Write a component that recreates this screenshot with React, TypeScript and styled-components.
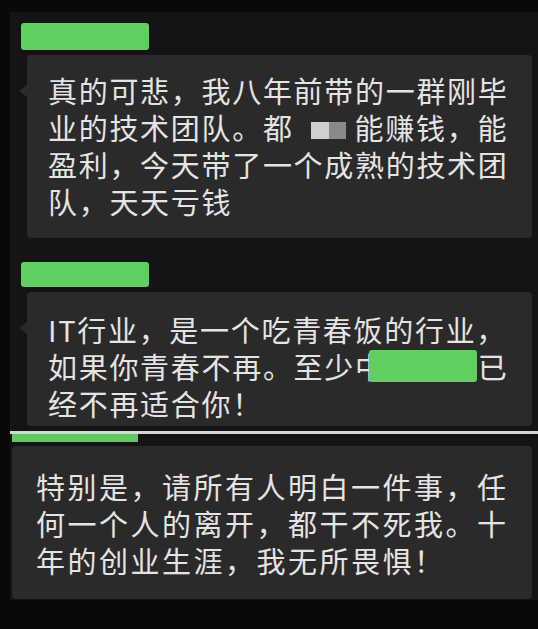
import React from "react";
import styled, { createGlobalStyle } from "styled-components";

const Global = createGlobalStyle`
  html, body {
    margin: 0;
    padding: 0;
    background: #090909;
  }
  #root {
    width: 538px;
    height: 629px;
    overflow: hidden;
  }
`;

const Page = styled.div`
  width: 538px;
  height: 629px;
  background: #090909;
  padding: 12px 0 0 10px;
  box-sizing: border-box;
  font-family: "Noto Sans CJK SC", "Noto Sans", sans-serif;
`;

const Panel = styled.div`
  display: flex;
  flex-direction: column;
  background: #141414;
  height: 588px;
`;

const NameBar = styled.div<{ $top: number; $h: number }>`
  margin: ${(p) => p.$top}px 0 0 11px;
  width: 128px;
  height: ${(p) => p.$h}px;
  background: #62cf62;
  border-radius: 3px;
`;

const Bubble = styled.div<{
  $top: number;
  $left: number;
  $pt: number;
  $pb: number;
  $pl: number;
  $ls: number;
  $tail?: boolean;
}>`
  position: relative;
  margin: ${(p) => p.$top}px 6px 0 ${(p) => p.$left}px;
  padding: ${(p) => p.$pt}px 0 ${(p) => p.$pb}px ${(p) => p.$pl}px;
  background: #2a2a2a;
  border-radius: 4px;
  color: #e4e4e4;
  font-size: 29px;
  line-height: 37px;
  letter-spacing: ${(p) => p.$ls}px;
  ${(p) =>
    p.$tail &&
    `
    &::before {
      content: "";
      position: absolute;
      left: -8px;
      top: 30px;
      border-style: solid;
      border-width: 6px 8px 6px 0;
      border-color: transparent #2a2a2a transparent transparent;
    }
  `}
`;

const Line = styled.span`
  display: block;
  height: 37px;
  white-space: nowrap;
`;

const Censor = styled.span`
  display: inline-flex;
  width: 61px;
  height: 17px;
  padding-left: 17px;
  box-sizing: border-box;
  vertical-align: 1px;
`;

const CensorBlock = styled.span<{ $shade: string; $w: number }>`
  display: block;
  width: ${(p) => p.$w}px;
  height: 17px;
  background: ${(p) => p.$shade};
`;

const Masked = styled.span`
  position: relative;
`;

const MaskBox = styled.span`
  position: absolute;
  left: 14px;
  top: 50%;
  margin-top: -16px;
  width: 108px;
  height: 32px;
  background: #62cf62;
  border-radius: 3px;
`;

const Divider = styled.div`
  margin-top: 5px;
  height: 3px;
  background: #d6d6d6;
`;

const Strip = styled.div`
  margin-left: 2px;
  width: 126px;
  height: 8px;
  background: #5fc95f;
`;

export default function App() {
  return (
    <>
      <Global />
      <Page>
        <Panel>
          <NameBar $top={11} $h={27} />
          <Bubble $top={5} $left={17} $pt={16.5} $pb={18.5} $pl={21} $ls={1.7} $tail>
            <Line>真的可悲，我八年前带的一群刚毕</Line>
            <Line>
              业的技术团队。都
              <Censor>
                <CensorBlock $shade="#cfcfcf" $w={18} />
                <CensorBlock $shade="#8a8a8a" $w={17} />
              </Censor>
              能赚钱，能
            </Line>
            <Line>盈利，今天带了一个成熟的技术团</Line>
            <Line>队，天天亏钱</Line>
          </Bubble>

          <NameBar $top={24} $h={25} />
          <Bubble $top={5} $left={17} $pt={18.5} $pb={4.5} $pl={21} $ls={1.7} $tail>
            <Line>IT行业，是一个吃青春饭的行业，</Line>
            <Line>
              如果你青春不再。至少
              <Masked>
                中年以后
                <MaskBox />
              </Masked>
              已
            </Line>
            <Line>经不再适合你！</Line>
          </Bubble>

          <Divider />
          <Strip />

          <Bubble $top={4} $left={2} $pt={21.5} $pb={20.5} $pl={24} $ls={2.5}>
            <Line>特别是，请所有人明白一件事，任</Line>
            <Line>何一个人的离开，都干不死我。十</Line>
            <Line>年的创业生涯，我无所畏惧！</Line>
          </Bubble>
        </Panel>
      </Page>
    </>
  );
}
